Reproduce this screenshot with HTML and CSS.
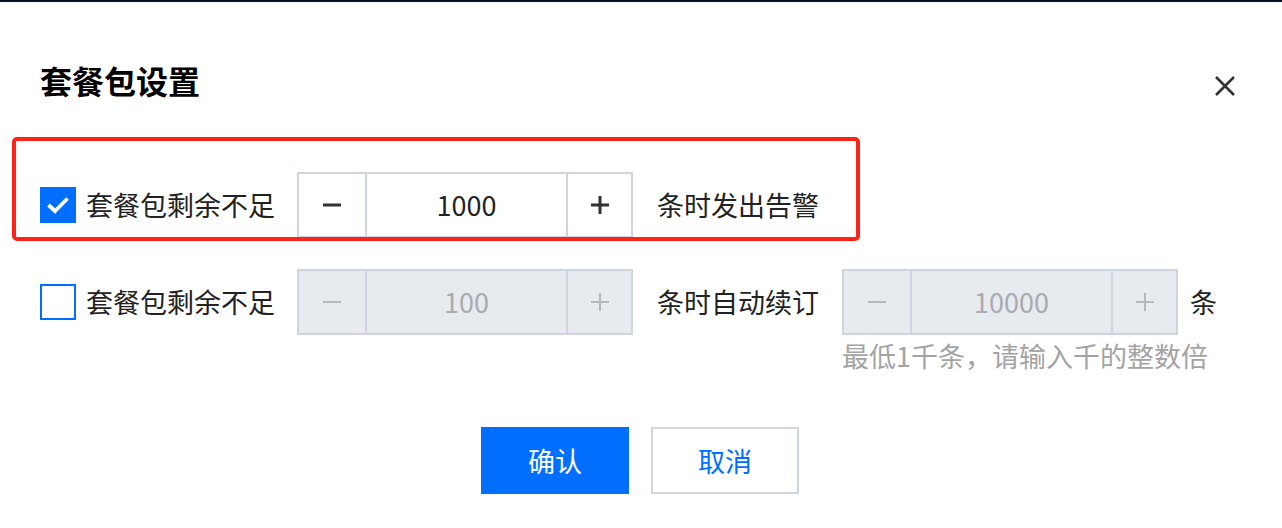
FILE: index.html
```html
<!DOCTYPE html>
<html lang="zh-CN">
<head>
<meta charset="utf-8">
<title>套餐包设置</title>
<link rel="stylesheet" href="styles.css">
</head>
<body>
<div class="topbar"></div>
<div class="dialog">
  <div class="header">
    <h1 class="title">套餐包设置</h1>
    <button class="close" aria-label="关闭">
      <svg width="24" height="24" viewBox="0 0 24 24"><path d="M3 3L21 21M21 3L3 21" stroke="#333" stroke-width="2.6" fill="none"/></svg>
    </button>
  </div>

  <div class="row row-first">
    <span class="check checked">
      <svg width="24" height="20" viewBox="0 0 24 20"><path d="M2.5 10L9 16L21.5 3.5" stroke="#fff" stroke-width="3.8" fill="none"/></svg>
    </span>
    <span class="label">套餐包剩余不足</span>
    <div class="num">
      <span class="step minus"><svg width="20" height="4" viewBox="0 0 20 4"><rect x="1" y="0.5" width="18" height="3" fill="#333"/></svg></span>
      <span class="value">1000</span>
      <span class="step plus"><svg width="20" height="20" viewBox="0 0 20 20"><rect x="1" y="8.5" width="18" height="3" fill="#333"/><rect x="8.5" y="1" width="3" height="18" fill="#333"/></svg></span>
    </div>
    <span class="label">条时发出告警</span>
  </div>

  <div class="row row-second">
    <span class="check"></span>
    <span class="label">套餐包剩余不足</span>
    <div class="num disabled">
      <span class="step minus"><svg width="20" height="4" viewBox="0 0 20 4"><rect x="1" y="1" width="18" height="2" fill="#b4b7bd"/></svg></span>
      <span class="value">100</span>
      <span class="step plus"><svg width="20" height="20" viewBox="0 0 20 20"><rect x="1" y="9" width="18" height="2" fill="#b4b7bd"/><rect x="9" y="1" width="2" height="18" fill="#b4b7bd"/></svg></span>
    </div>
    <span class="label">条时自动续订</span>
    <div class="field">
      <div class="num disabled">
        <span class="step minus"><svg width="20" height="4" viewBox="0 0 20 4"><rect x="1" y="1" width="18" height="2" fill="#b4b7bd"/></svg></span>
        <span class="value">10000</span>
        <span class="step plus"><svg width="20" height="20" viewBox="0 0 20 20"><rect x="1" y="9" width="18" height="2" fill="#b4b7bd"/><rect x="9" y="1" width="2" height="18" fill="#b4b7bd"/></svg></span>
      </div>
      <div class="help">最低1千条，请输入千的整数倍</div>
    </div>
    <span class="label unit">条</span>
  </div>

  <div class="footer">
    <button class="btn primary">确认</button>
    <button class="btn default">取消</button>
  </div>
</div>
<div class="annotation"></div>
</body>
</html>
```

FILE: styles.css
```css
html, body {
  margin: 0;
  padding: 0;
  background: #fff;
}
body {
  font-family: "Noto Sans CJK SC", "Noto Sans", sans-serif;
  color: #333;
  width: 1282px;
  height: 528px;
  overflow: hidden;
  position: relative;
}
.topbar {
  height: 2px;
  background: #0c1128;
}
.dialog {
  padding: 0 45px 0 40px;
}
.header {
  display: flex;
  justify-content: space-between;
  align-items: center;
  margin-top: 53px;
  height: 50px;
}
.title {
  margin: 0;
  font-size: 32px;
  line-height: 48px;
  font-weight: 700;
  color: #000;
}
.close {
  border: 0;
  background: none;
  padding: 0;
  width: 24px;
  height: 24px;
  margin-top: 12px;
  display: flex;
}
.row {
  display: flex;
  align-items: flex-start;
}
.row-first {
  margin-top: 67px;
}
.row-second {
  margin-top: 31px;
}
.check {
  box-sizing: border-box;
  width: 36px;
  height: 36px;
  margin-top: 15px;
  border: 2px solid #006eff;
  background: #fff;
  display: flex;
  align-items: center;
  justify-content: center;
  flex: none;
}
.check.checked {
  background: #006eff;
}
.label {
  font-size: 27px;
  line-height: 66px;
  height: 66px;
  color: #222;
  margin-left: 10px;
  margin-right: 22px;
  white-space: nowrap;
  flex: none;
}
.num + .label {
  margin-left: 24px;
  margin-right: 23px;
}
.field + .label.unit {
  margin-left: 12px;
  margin-right: 0;
}
.field {
  width: 336px;
  flex: none;
}
.num {
  box-sizing: border-box;
  display: flex;
  width: 336px;
  height: 66px;
  border: 2px solid #cfd5de;
  background: #fff;
  flex: none;
}
.num.disabled {
  background: #e7eaef;
}
.step {
  box-sizing: border-box;
  display: flex;
  align-items: center;
  justify-content: center;
  flex: none;
}
.minus {
  width: 68px;
  border-right: 2px solid #cfd5de;
}
.plus {
  width: 65px;
  border-left: 2px solid #cfd5de;
}
.value {
  flex: 1;
  text-align: center;
  font-size: 27px;
  line-height: 62px;
  color: #222;
}
.disabled .value {
  color: #a9abb0;
}
.help {
  margin-top: 3px;
  font-size: 27px;
  line-height: 36px;
  color: #a3a3a3;
  white-space: nowrap;
}
.footer {
  display: flex;
  justify-content: center;
  gap: 22px;
  margin-top: 53px;
  padding-left: 3px;
}
.btn {
  box-sizing: border-box;
  width: 148px;
  height: 67px;
  font-family: "Noto Sans CJK SC", "Noto Sans", sans-serif;
  font-size: 27px;
  border: 2px solid #cfd5de;
  background: #fff;
  padding: 0;
}
.btn.primary {
  background: #006eff;
  border-color: #006eff;
  color: #fff;
}
.btn.default {
  color: #006eff;
}
.annotation {
  position: absolute;
  left: 12px;
  top: 137px;
  width: 848px;
  height: 104px;
  box-sizing: border-box;
  border: 4px solid #ff2219;
  border-radius: 5px;
}
```
